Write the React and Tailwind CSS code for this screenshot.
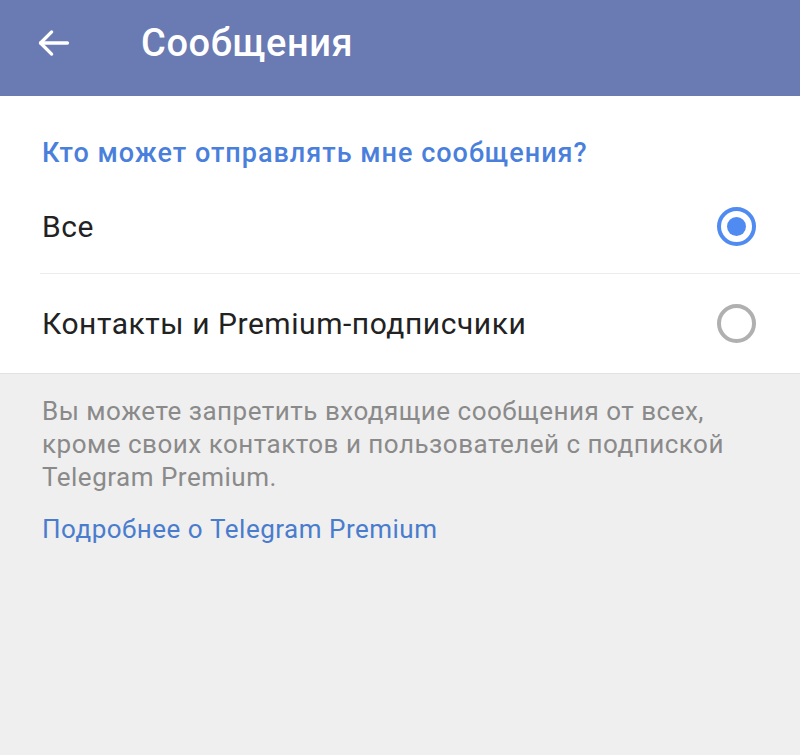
export default function App() {
  return (
    <div className="w-[800px] h-[755px] bg-[#efefef] overflow-hidden" style={{ fontFamily: "Roboto, 'Noto Sans', sans-serif" }}>
      {/* header */}
      <div className="h-[96px] bg-[#6a7ab2] flex items-center pb-[10px]">
        <div className="w-[141px] flex pl-[35px]">
          <svg width="38" height="38" viewBox="0 0 24 24" fill="none" stroke="white" strokeWidth="2.1" strokeLinecap="round" strokeLinejoin="round">
            <path d="M20.5 12H3.5" />
            <path d="M10.5 5l-7 7 7 7" />
          </svg>
        </div>
        <h1 className="text-white text-[38px] font-medium tracking-[0.6px] leading-none">Сообщения</h1>
      </div>

      {/* options */}
      <div className="bg-white border-b border-[#e2e2e2]">
        <div className="pl-[42px] pt-[39px] pb-[9px] text-[27px] font-medium tracking-[1px] text-[#4a7fdc] leading-[36px]">
          Кто может отправлять мне сообщения?
        </div>
        <div className="ml-[40px] border-b border-[#ececec]">
          <div className="h-[93px] flex items-center justify-between pr-[44px]">
            <span className="pl-[2px] text-[30px] tracking-[0.6px] text-[#222]">Все</span>
            <span className="w-[39px] h-[39px] rounded-full border-[4px] border-[#4f8bf0] flex items-center justify-center">
              <span className="w-[19px] h-[19px] rounded-full bg-[#4f8bf0]" />
            </span>
          </div>
        </div>
        <div className="h-[99px] flex items-center justify-between pl-[42px] pr-[44px]">
          <span className="text-[30px] tracking-[0.55px] text-[#222]">Контакты и Premium-подписчики</span>
          <span className="w-[39px] h-[39px] rounded-full border-[4px] border-[#b0b0b0]" />
        </div>
      </div>

      {/* footer text */}
      <div className="px-[42px] pt-[21px]">
        <p className="text-[26px] tracking-[0.5px] leading-[33px] text-[#8a8a8a] whitespace-nowrap">
          Вы можете запретить входящие сообщения от всех,<br />
          кроме своих контактов и пользователей с подпиской<br />
          Telegram Premium.
        </p>
        <p className="mt-[19px] text-[26px] tracking-[0.5px] leading-[33px] text-[#4a7ccd]">Подробнее о Telegram Premium</p>
      </div>
    </div>
  );
}
